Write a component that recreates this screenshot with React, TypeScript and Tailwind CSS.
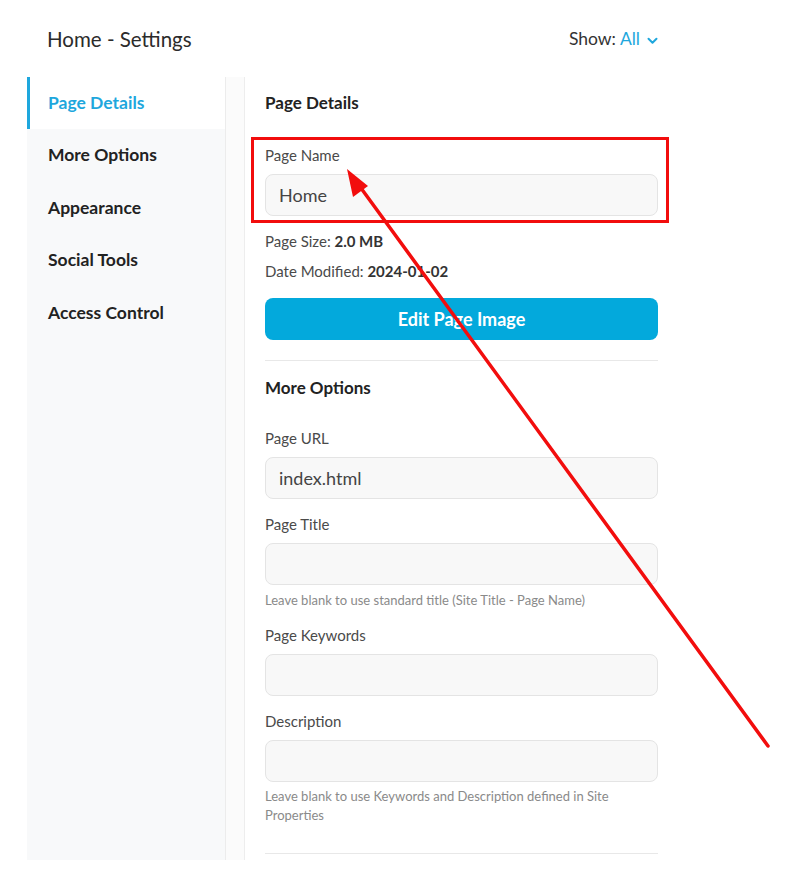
import React from "react";

function Field({ label, value, help }: { label: string; value?: string; help?: React.ReactNode }) {
  return (
    <div className="flex flex-col">
      <div className="text-[15px] leading-[20px] text-[#4a4a4a]">{label}</div>
      <div className="mt-[9px] h-[42px] rounded-[8px] border border-[#e4e4e4] bg-[#f8f8f8] px-[13px] flex items-center text-[18px] text-[#444]">
        {value}
      </div>
      {help}
    </div>
  );
}

export default function App() {
  const nav = ["More Options", "Appearance", "Social Tools", "Access Control"];
  return (
    <div className="relative w-[793px] h-[876px] bg-white font-['Lato','Noto_Sans',sans-serif] overflow-hidden">
      <div className="flex items-center justify-between h-[77px] pl-[47px] pr-[135px] pt-[2px]">
        <div className="text-[20.5px] text-[#2b2b2b]">Home - Settings</div>
        <div className="flex items-center text-[17.5px] text-[#333]">
          <span>Show:</span>
          <span className="ml-[4px] text-[#1ea7dd]">All</span>
          <svg className="ml-[7px] mt-[2px]" width="11" height="8" viewBox="0 0 11 8">
            <path d="M1.5 1.8 L5.5 5.8 L9.5 1.8" fill="none" stroke="#1ea7dd" strokeWidth="2" strokeLinecap="round" strokeLinejoin="round" />
          </svg>
        </div>
      </div>

      <div className="flex ml-[27px] h-[783px]">
        <div className="w-[199px] bg-[#f8f9fa] border-r border-[#ececec] flex flex-col">
          <div className="h-[52px] bg-white border-l-[3px] border-[#1ea7dd] pl-[18px] flex items-center text-[17.5px] font-bold text-[#1ea7dd]">
            Page Details
          </div>
          {nav.map((n) => (
            <div key={n} className="h-[52.5px] pl-[21px] flex items-center text-[17.5px] font-bold text-[#222]">
              {n}
            </div>
          ))}
        </div>
        <div className="w-[19px] bg-[#fbfbfb] border-r border-[#ededed]" />
        <div className="w-[433px] pl-[20px] pr-[20px] flex flex-col">
          <div className="mt-[14px] h-[24px] flex items-center text-[17px] font-bold text-[#222]">Page Details</div>
          <div className="relative mt-[30px]">
            <div className="absolute left-[-14px] right-[-11px] top-[-8px] bottom-[-7px] border-[3px] border-[#f20d0d]" />
            <Field label="Page Name" value="Home" />
          </div>
          <div className="mt-[15px] text-[15px] leading-[20px] text-[#4a4a4a]">
            Page Size: <span className="font-bold text-[#333]">2.0 MB</span>
          </div>
          <div className="mt-[10px] text-[15px] leading-[20px] text-[#4a4a4a]">
            Date Modified: <span className="font-bold text-[#333]">2024-01-02</span>
          </div>
          <button className="mt-[17px] h-[42px] rounded-[8px] bg-[#03a9dc] text-white text-[18px] font-bold">
            Edit Page Image
          </button>
          <div className="mt-[20px] h-px bg-[#e8e8e8]" />
          <div className="mt-[15px] h-[24px] flex items-center text-[17px] font-bold text-[#222]">More Options</div>
          <div className="mt-[28px]">
            <Field label="Page URL" value="index.html" />
          </div>
          <div className="mt-[15px]">
            <Field
              label="Page Title"
              help={
                <div className="mt-[7px] text-[13px] leading-[16px] text-[#8a8a8a]">
                  Leave blank to use standard title (Site Title - Page Name)
                </div>
              }
            />
          </div>
          <div className="mt-[17px]">
            <Field label="Page Keywords" />
          </div>
          <div className="mt-[15px]">
            <Field
              label="Description"
              help={
                <div className="mt-[5px] text-[13px] leading-[19px] text-[#8a8a8a]">
                  Leave blank to use Keywords and Description defined in Site Properties
                </div>
              }
            />
          </div>
          <div className="mt-[28px] h-px bg-[#e8e8e8]" />
        </div>
      </div>

      <svg className="absolute left-0 top-0 pointer-events-none" width="793" height="876" viewBox="0 0 793 876">
        <line x1="768" y1="746" x2="358" y2="184" stroke="#f20d0d" strokeWidth="3.5" strokeLinecap="round" />
        <polygon points="347,169 368,186 353,197" fill="#f20d0d" />
      </svg>
    </div>
  );
}
